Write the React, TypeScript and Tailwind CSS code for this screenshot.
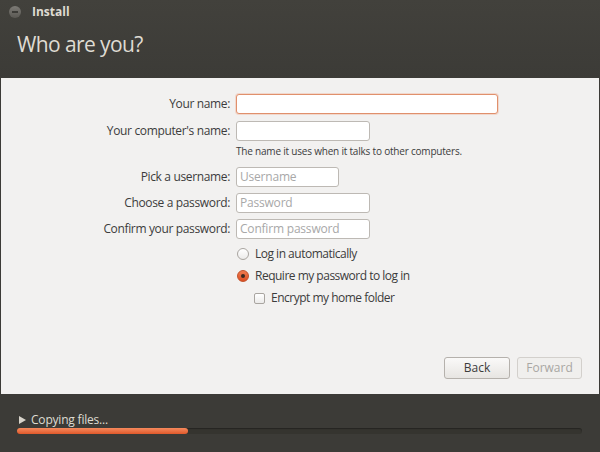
import React from "react";

const font = { fontFamily: "'Open Sans', 'Noto Sans', 'DejaVu Sans', sans-serif" };

function Field({
  label,
  width,
  placeholder,
  focused,
}: {
  label: string;
  width: string;
  placeholder?: string;
  focused?: boolean;
}) {
  return (
    <div className="flex items-center h-[20px]">
      <div className="w-[230px] pr-[1px] text-right text-[12px] text-[#3c3c3c] tracking-[-0.35px]">{label}</div>
      <div
        className={
          "ml-[5px] h-[20px] rounded-[3px] bg-white flex items-center px-[3px] text-[12px] text-[#a8a8a8] tracking-[-0.2px] " +
          width +
          (focused
            ? " border border-[#e0906c] shadow-[0_0_0_1px_rgba(240,170,140,0.35)]"
            : " border border-[#bdb9b4]")
        }
      >
        {placeholder}
      </div>
    </div>
  );
}

export default function App() {
  return (
    <div className="w-[600px] h-[452px] flex flex-col bg-[#3c3b37] overflow-hidden" style={font}>
      {/* title bar + header */}
      <div className="h-[78px] flex flex-col bg-gradient-to-b from-[#42413c] to-[#3c3b37]">
        <div className="h-[23px] flex items-center pl-[9px]">
          <div className="w-[12px] h-[12px] rounded-full bg-gradient-to-b from-[#7d7b76] to-[#5a5853] flex items-center justify-center">
            <div className="w-[6px] h-[2px] bg-[#3c3b37]" />
          </div>
          <span className="ml-[11px] text-[12px] font-bold text-[#dfdbd2]">Install</span>
        </div>
        <div className="pl-[17px] pt-[11px] text-[21px] text-[#dfdbd2] leading-none tracking-[-0.6px]">Who are you?</div>
      </div>

      {/* content */}
      <div className="h-[316px] mx-[1px] bg-[#f2f1f0] flex flex-col pt-[16px] relative">
        <Field label="Your name:" width="w-[262px]" focused />
        <div className="mt-[7px]">
          <Field label="Your computer's name:" width="w-[134px]" />
        </div>
        <div className="ml-[235px] mt-[3px] text-[10px] text-[#3c3c3c] tracking-[-0.2px]">
          The name it uses when it talks to other computers.
        </div>
        <div className="mt-[8px]">
          <Field label="Pick a username:" width="w-[103px]" placeholder="Username" />
        </div>
        <div className="mt-[6px]">
          <Field label="Choose a password:" width="w-[134px]" placeholder="Password" />
        </div>
        <div className="mt-[6px]">
          <Field label="Confirm your password:" width="w-[134px]" placeholder="Confirm password" />
        </div>

        <div className="ml-[236px] mt-[8px] flex items-center h-[14px] text-[12px] text-[#3c3c3c] tracking-[-0.5px]">
          <div className="w-[12px] h-[12px] rounded-full border border-[#a9a5a0] bg-gradient-to-b from-white to-[#ecebea]" />
          <span className="ml-[6px]">Log in automatically</span>
        </div>
        <div className="ml-[236px] mt-[8px] flex items-center h-[14px] text-[12px] text-[#3c3c3c] tracking-[-0.5px]">
          <div className="w-[12px] h-[12px] rounded-full border border-[#c2512a] bg-gradient-to-b from-[#f07b4f] to-[#dd4f22] flex items-center justify-center">
            <div className="w-[4px] h-[4px] rounded-full bg-[#3c2a22]" />
          </div>
          <span className="ml-[6px]">Require my password to log in</span>
        </div>
        <div className="ml-[253px] mt-[8px] flex items-center h-[14px] text-[12px] text-[#3c3c3c] tracking-[-0.5px]">
          <div className="w-[11px] h-[11px] rounded-[2px] border border-[#a9a5a0] bg-gradient-to-b from-white to-[#ecebea]" />
          <span className="ml-[6px]">Encrypt my home folder</span>
        </div>

        <div className="flex-1" />
        <div className="flex justify-end gap-[7px] pr-[17px] pb-[15px]">
          <div className="w-[66px] h-[22px] rounded-[3px] border border-[#b5b1ac] bg-gradient-to-b from-[#faf9f8] to-[#e7e5e2] flex items-center justify-center text-[12px] text-[#3c3c3c]">
            Back
          </div>
          <div className="w-[65px] h-[22px] rounded-[3px] border border-[#d3d0cc] bg-[#f0efed] flex items-center justify-center text-[12px] text-[#a9a7a3]">
            Forward
          </div>
        </div>
      </div>

      {/* footer */}
      <div className="flex-1 flex flex-col pl-[17px] pr-[18px] pt-[19px]">
        <div className="flex items-center h-[14px] text-[12px] text-[#dfdbd2] tracking-[-0.2px]">
          <svg width="7" height="8" viewBox="0 0 7 8" className="ml-[2px]">
            <path d="M0 0 L7 4 L0 8 Z" fill="#d8d4cb" />
          </svg>
          <span className="ml-[5px]">Copying files...</span>
        </div>
        <div className="mt-[1px] h-[6px] rounded-full bg-[#35342f] shadow-[inset_0_1px_1px_rgba(0,0,0,0.3)]">
          <div className="h-[6px] w-[171px] rounded-full bg-gradient-to-b from-[#f5895c] to-[#e0592a]" />
        </div>
      </div>
    </div>
  );
}
